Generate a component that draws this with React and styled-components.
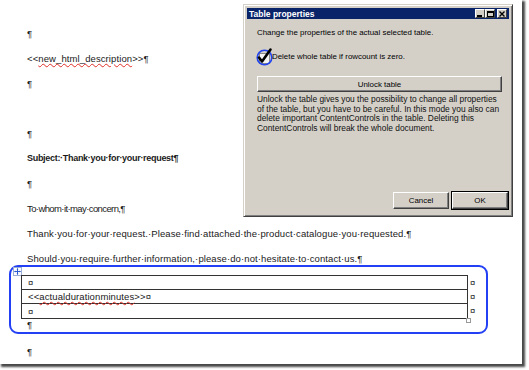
import styled, { createGlobalStyle } from 'styled-components'

const GlobalStyle = createGlobalStyle`
  html, body {
    margin: 0;
    padding: 0;
    background: #ffffff;
  }
  #root {
    width: 529px;
    height: 370px;
    position: relative;
    overflow: hidden;
  }
`

const docLines = [
  { text: '¶' },
  { text: '<<', spell: 'new_html_description', after: '>>¶' },
  { text: '¶' },
  { gap: true },
  { text: '¶' },
  { text: 'Subject:·Thank·you·for·your·request¶', bold: true },
  { text: '¶' },
  { text: 'To·whom·it·may·concern,¶', tight: true },
  { text: 'Thank·you·for·your·request.·Please·find·attached·the·product·catalogue·you·requested.¶' },
]

export default function App() {
  return (
    <>
      <GlobalStyle />
      <Page>
        {docLines.map((l, i) =>
          l.gap ? (
            <Para key={i} />
          ) : (
            <Para key={i} $bold={l.bold} $tight={l.tight}>
              {l.text}
              {l.spell && <Squiggle>{l.spell}</Squiggle>}
              {l.after}
            </Para>
          )
        )}
        <Para $short>
          Should·you·require·further·information,·please·do·not·hesitate·to·contact·us.¶
        </Para>
        <TableFrame>
          <MoveHandle>
            <svg width="9" height="9" viewBox="0 0 9 9">
              <rect x="0.5" y="0.5" width="8" height="8" fill="#fff" stroke="#9aaed8" />
              <path d="M4.5 1.5v6M1.5 4.5h6" stroke="#2b5bd0" strokeWidth="1" />
              <path d="M4.5 1.2l-1 1.2h2zM4.5 7.8l-1-1.2h2zM1.2 4.5l1.2-1v2zM7.8 4.5l-1.2-1v2z" fill="#2b5bd0" />
            </svg>
          </MoveHandle>
          <DocTable>
            <Row>
              <Cell>¤</Cell>
              <RowEnd>¤</RowEnd>
            </Row>
            <Row>
              <Cell>
                {'<<'}
                <Squiggle>actualdurationminutes</Squiggle>
                {'>>¤'}
              </Cell>
              <RowEnd>¤</RowEnd>
            </Row>
            <Row $last>
              <Cell>¤</Cell>
              <RowEnd>¤</RowEnd>
            </Row>
            <ResizeBox />
          </DocTable>
          <TablePara>¶</TablePara>
        </TableFrame>
        <Para $after>¶</Para>
      </Page>

      <Dialog>
        <TitleBar>
          <Title>Table properties</Title>
          <TitleButtons>
            <TitleBtn>
              <svg width="6" height="6" viewBox="0 0 6 6">
                <rect x="0" y="4" width="5" height="2" fill="#000" />
              </svg>
            </TitleBtn>
            <TitleBtn>
              <svg width="7" height="6" viewBox="0 0 7 6">
                <rect x="0.5" y="0.5" width="6" height="5" fill="none" stroke="#000" />
                <rect x="0" y="0" width="7" height="2" fill="#000" />
              </svg>
            </TitleBtn>
            <TitleBtn $close>
              <svg width="6" height="6" viewBox="0 0 6 6">
                <path d="M0.5 0.5l5 5M5.5 0.5l-5 5" stroke="#000" strokeWidth="1.4" />
              </svg>
            </TitleBtn>
          </TitleButtons>
        </TitleBar>
        <DialogBody>
          <Label>Change the properties of the actual selected table.</Label>
          <CheckRow>
            <CheckIcon>
              <svg width="20" height="20" viewBox="0 0 20 20">
                <rect x="4.5" y="6.5" width="10" height="10" fill="#f4f4f4" stroke="#888" />
                <circle cx="9.5" cy="10.5" r="7.3" fill="none" stroke="#2244ee" strokeWidth="1.6" />
                <path d="M4 10.5l3 4 8.5-12" fill="none" stroke="#000" strokeWidth="2.6" strokeLinecap="round" strokeLinejoin="round" />
              </svg>
            </CheckIcon>
            <Label>Delete whole table if rowcount is zero.</Label>
          </CheckRow>
          <WideButton>Unlock table</WideButton>
          <Info>
            Unlock the table gives you the possibility to change all properties
            <br />
            of the table, but you have to be careful. In this mode you also can
            <br />
            delete important ContentControls in the table. Deleting this
            <br />
            ContentControls will break the whole document.
          </Info>
          <Footer>
            <DlgButton>Cancel</DlgButton>
            <DlgButton $default>OK</DlgButton>
          </Footer>
        </DialogBody>
      </Dialog>
    </>
  )
}

const Page = styled.div`
  width: 522px;
  height: 364px;
  box-sizing: border-box;
  padding-top: 21px;
  background: #ffffff;
  box-shadow: 2px 2px 2px 1px rgba(40, 40, 40, 0.85);
  font-family: 'Liberation Sans', Arial, sans-serif;
  font-size: 9.5px;
  color: #1a1a1a;
  display: flex;
  flex-direction: column;
`

const Para = styled.div`
  height: ${(p) => (p.$short ? '19px' : '25px')};
  line-height: 25px;
  padding-left: 27px;
  margin-top: ${(p) => (p.$after ? '5px' : '0')};
  font-weight: ${(p) => (p.$bold ? 'bold' : 'normal')};
  font-size: ${(p) => (p.$bold ? '9px' : '9.5px')};
  letter-spacing: ${(p) => (p.$bold ? '-0.3px' : p.$tight ? '-0.6px' : '0.1px')};
  white-space: nowrap;
`

const Squiggle = styled.span`
  text-decoration: underline wavy #e0302a;
  text-decoration-thickness: 0.7px;
  text-underline-offset: 1px;
`

const TableFrame = styled.div`
  position: relative;
  margin-left: 9px;
  width: 479px;
  height: 69px;
  box-sizing: border-box;
  border: 2px solid #2340f4;
  border-radius: 9px;
  padding: 8px 0 0 10px;
`

const MoveHandle = styled.div`
  position: absolute;
  left: 2px;
  top: 0;
  line-height: 0;
`

const DocTable = styled.div`
  position: relative;
  width: 447px;
  border: 1px solid #333;
  box-sizing: border-box;
`

const Row = styled.div`
  position: relative;
  height: 14px;
  box-sizing: border-box;
  border-bottom: ${(p) => (p.$last ? 'none' : '1px solid #333')};
  display: flex;
  align-items: center;
`

const Cell = styled.div`
  padding-left: 6px;
  letter-spacing: 0.1px;
`

const RowEnd = styled.div`
  position: absolute;
  left: 448px;
  top: 0;
  line-height: 14px;
`

const ResizeBox = styled.div`
  position: absolute;
  right: -4px;
  bottom: -5px;
  width: 3px;
  height: 3px;
  border: 1px solid #999;
  background: #fff;
`

const TablePara = styled.div`
  padding-left: 6px;
  line-height: 12px;
`

const Dialog = styled.div`
  position: absolute;
  left: 243px;
  top: 4px;
  width: 270px;
  height: 213px;
  box-sizing: border-box;
  background: #d4d0c8;
  border: 1px solid;
  border-color: #d4d0c8 #404040 #404040 #d4d0c8;
  box-shadow: inset 1px 1px 0 #ffffff, inset -1px -1px 0 #808080;
  padding: 3px;
  display: flex;
  flex-direction: column;
  font-family: 'Liberation Sans', Arial, sans-serif;
  color: #000;
`

const TitleBar = styled.div`
  height: 11px;
  background: #0a246a;
  display: flex;
  align-items: center;
  justify-content: space-between;
  padding: 0 2px 0 2px;
`

const Title = styled.div`
  color: #fff;
  font-weight: bold;
  font-size: 8.5px;
`

const TitleButtons = styled.div`
  display: flex;
`

const TitleBtn = styled.div`
  width: 10px;
  height: 9px;
  box-sizing: border-box;
  margin-left: ${(p) => (p.$close ? '2px' : '0')};
  background: #d4d0c8;
  border: 1px solid;
  border-color: #fff #404040 #404040 #fff;
  display: flex;
  align-items: center;
  justify-content: center;
`

const DialogBody = styled.div`
  flex: 1;
  display: flex;
  flex-direction: column;
  padding: 9px 1px 4px 10px;
  font-size: 7.9px;
`

const Label = styled.div`
  line-height: 10px;
  white-space: nowrap;
`

const CheckRow = styled.div`
  display: flex;
  align-items: center;
  margin-top: 9px;
  margin-left: -2px;
`

const CheckIcon = styled.div`
  width: 20px;
  height: 20px;
  line-height: 0;
  margin-right: -3px;
`

const WideButton = styled.div`
  margin: 9px 6px 0 0;
  height: 16px;
  box-sizing: border-box;
  border: 1px solid;
  border-color: #fff #404040 #404040 #fff;
  box-shadow: inset -1px -1px 0 #808080;
  display: flex;
  align-items: center;
  justify-content: center;
`

const Info = styled.div`
  margin-top: 3px;
  line-height: 9.6px;
  font-size: 8.4px;
  color: #111;
  white-space: nowrap;
`

const Footer = styled.div`
  margin-top: auto;
  display: flex;
  justify-content: flex-end;
  gap: 3px;
`

const DlgButton = styled.div`
  width: 56px;
  height: 17px;
  box-sizing: border-box;
  border: 1px solid;
  border-color: #fff #404040 #404040 #fff;
  box-shadow: inset -1px -1px 0 #808080;
  outline: ${(p) => (p.$default ? '1px solid #000' : 'none')};
  display: flex;
  align-items: center;
  justify-content: center;
`
